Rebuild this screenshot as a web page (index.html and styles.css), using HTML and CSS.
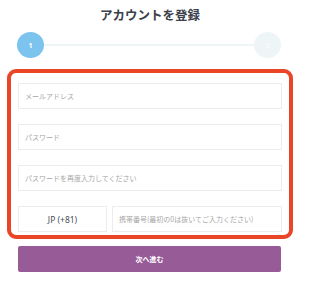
FILE: index.html
```html
<!DOCTYPE html>
<html lang="ja">
<head>
<meta charset="utf-8">
<link rel="stylesheet" href="styles.css">
</head>
<body>
<div class="page">
  <h1 class="title">アカウントを登録</h1>
  <div class="steps">
    <span class="step step-active">1</span>
    <span class="step-line"></span>
    <span class="step step-next">2</span>
  </div>
  <form class="form-box">
    <div class="field"><span class="placeholder">メールアドレス</span></div>
    <div class="field"><span class="placeholder">パスワード</span></div>
    <div class="field"><span class="placeholder">パスワードを再度入力してください</span></div>
    <div class="phone-row">
      <div class="field country">JP (+81)</div>
      <div class="field phone"><span class="placeholder">携帯番号(最初の0は抜いてご入力ください)</span></div>
    </div>
  </form>
  <button class="next-btn" type="button">次へ進む</button>
</div>
</body>
</html>
```

FILE: styles.css
```css
* { box-sizing: border-box; }
html, body { margin: 0; padding: 0; background: #ffffff; }
body {
  font-family: "Noto Sans", "Noto Sans CJK JP", sans-serif;
  width: 300px;
}
.page {
  display: flex;
  flex-direction: column;
}
.title {
  margin: 0;
  height: 32px;
  line-height: 32px;
  text-align: center;
  font-size: 12.5px;
  font-weight: 700;
  color: #3b404b;
}
.steps {
  display: flex;
  align-items: center;
  margin: 0 19px 0 17px;
  height: 26px;
}
.step {
  width: 27px;
  height: 26px;
  border-radius: 50%;
  display: flex;
  align-items: center;
  justify-content: center;
  color: #ffffff;
  font-size: 7px;
  font-weight: 700;
  flex: none;
}
.step-active { background: #7cc3ee; }
.step-next { background: #eef5f7; color: #f7fbfc; }
.step-line {
  flex: 1;
  height: 2px;
  background: #eef5f7;
}
.form-box {
  margin: 11px 7px 0 7px;
  border: 4px solid #ea4527;
  border-radius: 9px;
  padding: 10px 7px 3px 7px;
  display: flex;
  flex-direction: column;
  gap: 15px;
}
.field {
  height: 26px;
  border: 1px solid #ececec;
  display: flex;
  align-items: center;
  padding-left: 6px;
  background: #fff;
}
.placeholder {
  font-size: 7px;
  color: #a6a6a6;
  font-family: "Noto Sans CJK JP", sans-serif;
}
.phone-row {
  display: flex;
  gap: 5px;
}
.country {
  width: 89px;
  justify-content: center;
  padding-left: 0;
  font-size: 8.5px;
  color: #4a4d55;
  flex: none;
}
.phone { flex: 1; }
.next-btn {
  margin: 7px 19px 0 18px;
  height: 26px;
  border: none;
  border-radius: 2px;
  background: #975b98;
  color: #ffffff;
  font-family: "Noto Sans CJK JP", sans-serif;
  font-size: 7px;
  font-weight: 700;
  padding: 0;
}
```
